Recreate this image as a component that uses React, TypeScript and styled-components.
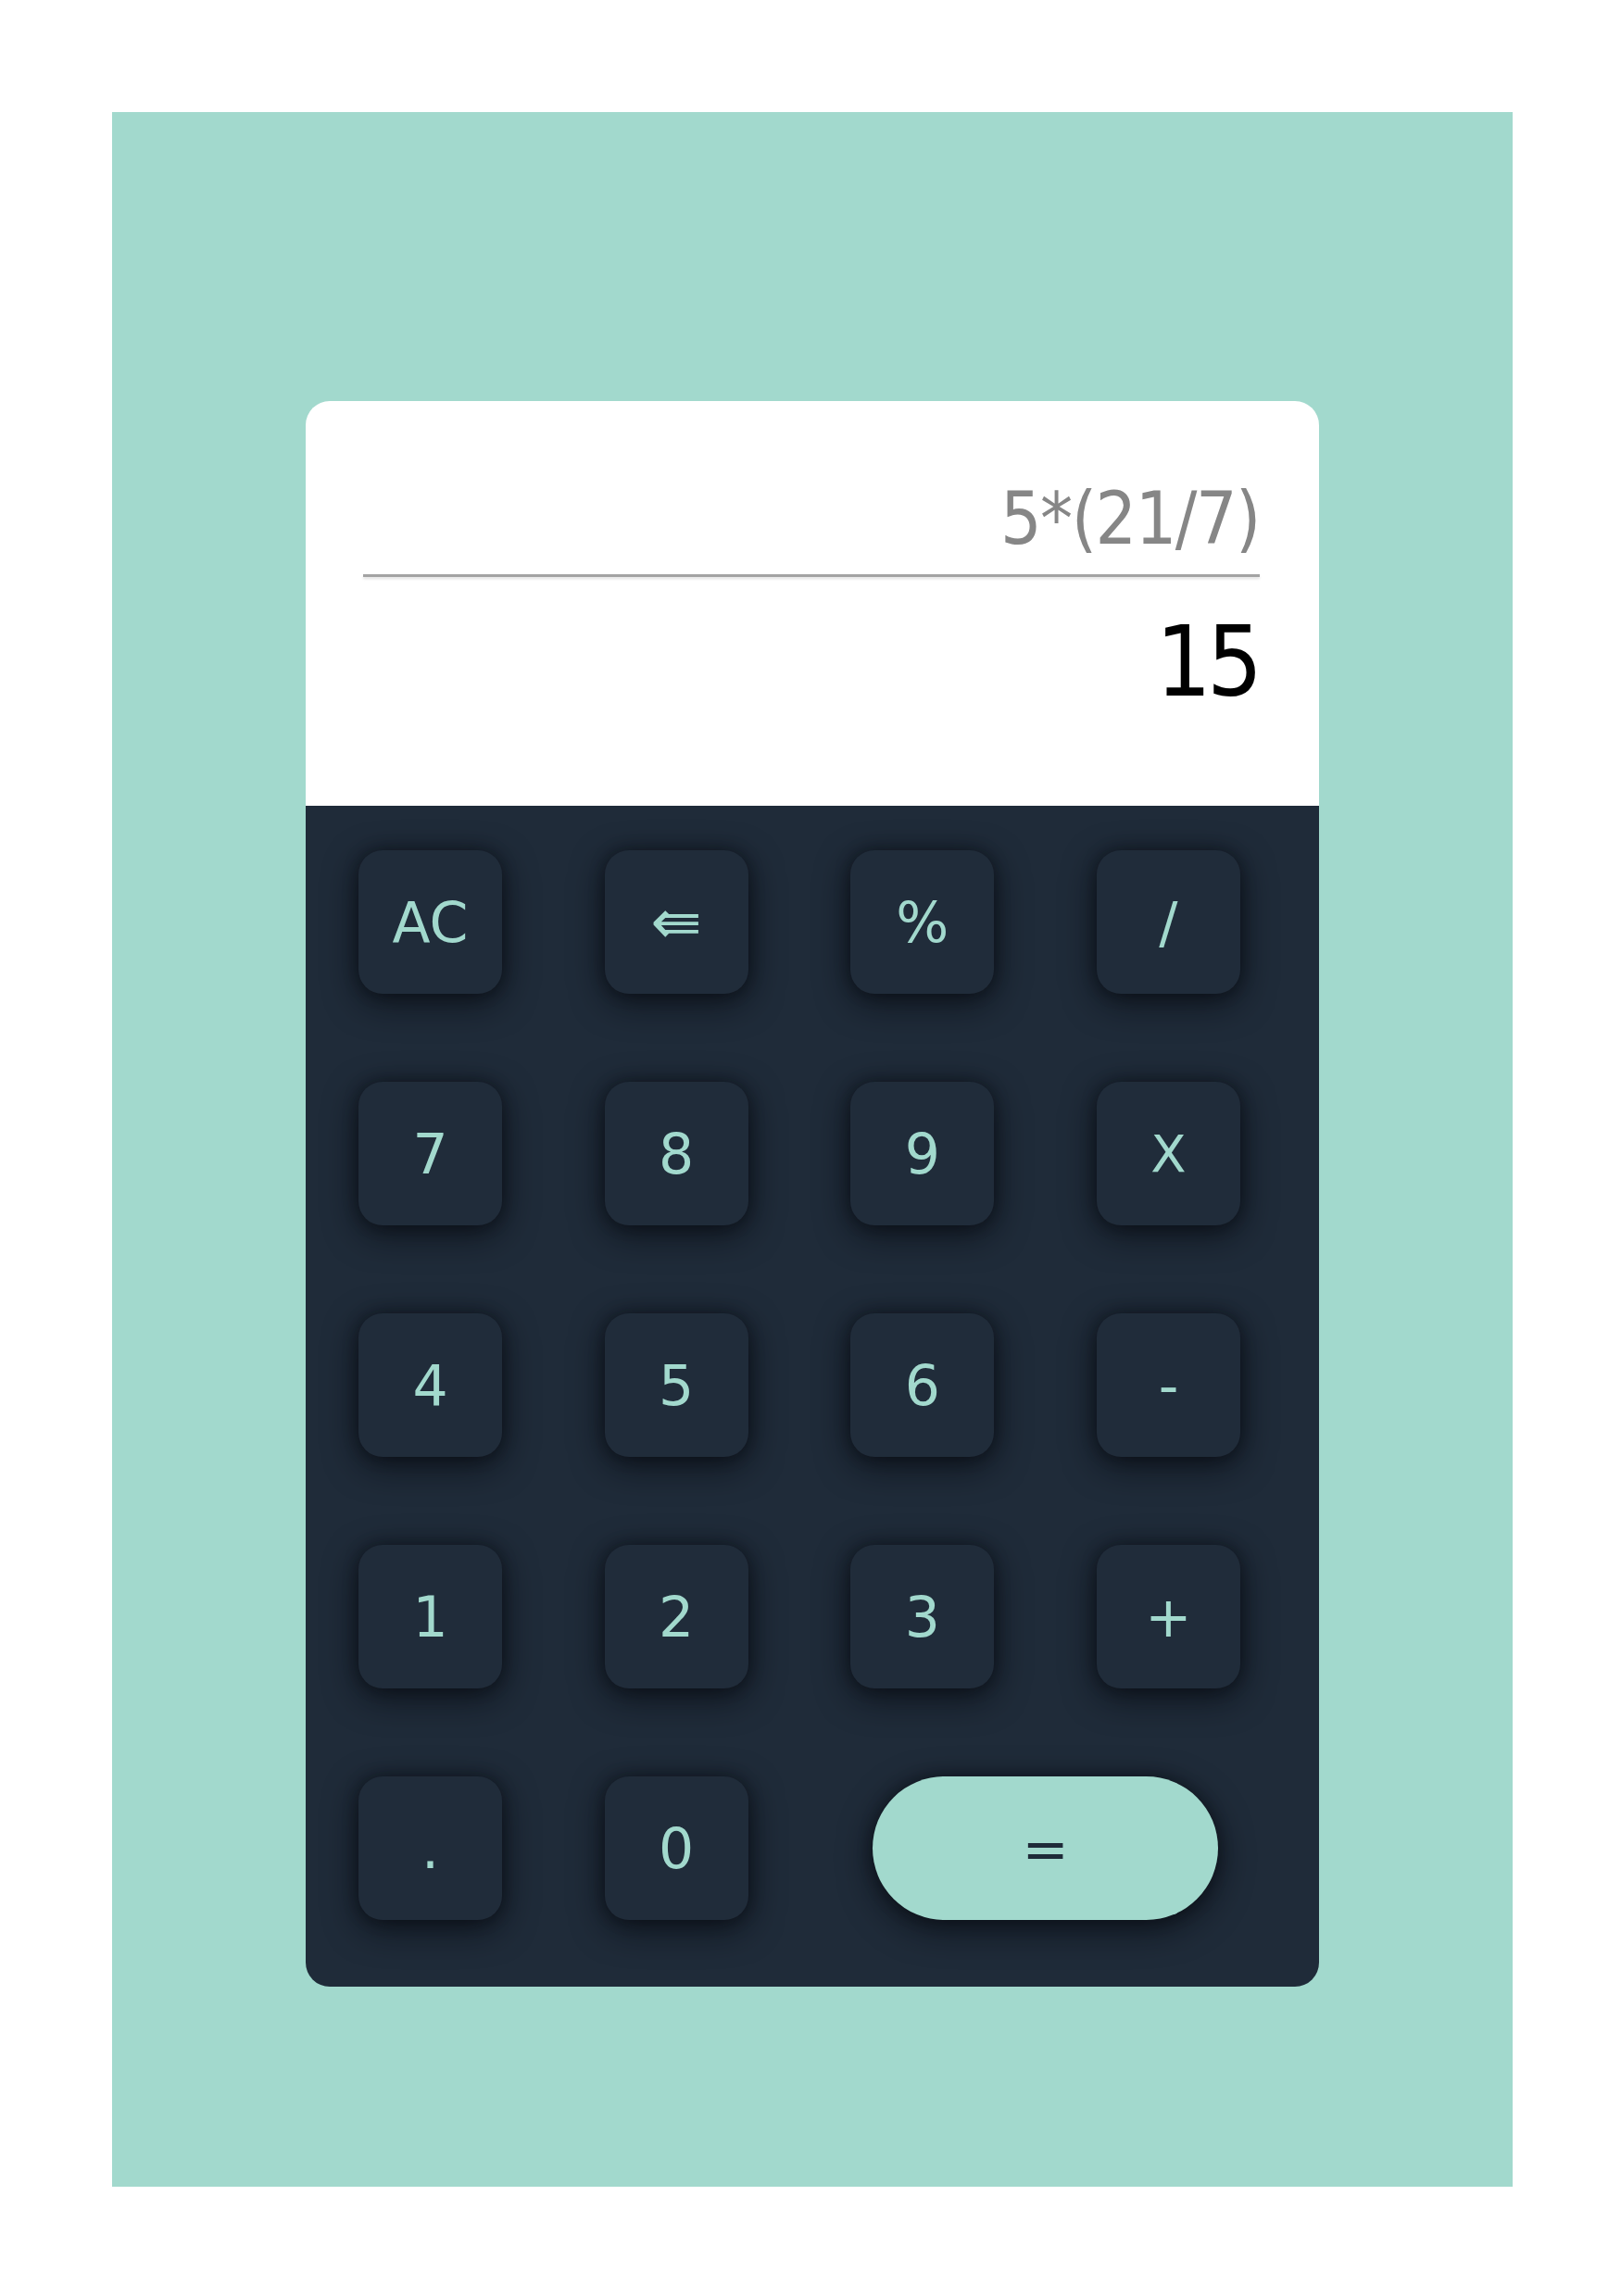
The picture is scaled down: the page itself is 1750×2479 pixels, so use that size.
import React from "react";
import styled, { createGlobalStyle } from "styled-components";

const GlobalStyle = createGlobalStyle`
  html, body {
    margin: 0;
    padding: 0;
    background: #ffffff;
  }
  body {
    font-family: "DejaVu Sans", "Noto Sans", sans-serif;
  }
`;

const Page = styled.div`
  width: 1750px;
  height: 2479px;
  box-sizing: border-box;
  padding: 121px 117px 118px 121px;
  background: #ffffff;
`;

const Poster = styled.div`
  width: 1512px;
  height: 2240px;
  box-sizing: border-box;
  background: #a2d9cd;
  padding: 312px 209px 216px 209px;
`;

const Calculator = styled.div`
  width: 1094px;
  border-radius: 26px;
  overflow: hidden;
  display: flex;
  flex-direction: column;
`;

const Display = styled.div`
  height: 437px;
  box-sizing: border-box;
  background: #ffffff;
  padding: 88px 64px 0 62px;
  display: flex;
  flex-direction: column;
  align-items: stretch;
  font-family: "DejaVu Sans Condensed", "DejaVu Sans", sans-serif;
  font-stretch: condensed;
`;

const Expression = styled.div`
  font-size: 78px;
  line-height: 78px;
  letter-spacing: -1.5px;
  color: #868686;
  text-align: right;
`;

const Divider = styled.div`
  margin-top: 21px;
  height: 3px;
  background: #a3a3a3;
  box-shadow: 0 2px 3px rgba(0, 0, 0, 0.12);
`;

const Result = styled.div`
  margin-top: 40px;
  font-size: 105px;
  line-height: 105px;
  letter-spacing: -5px;
  padding-right: 2px;
  color: #000000;
  text-align: right;
`;

const Keypad = styled.div`
  background: #1f2b39;
  padding: 48px 85px 72px 57px;
  display: grid;
  grid-template-columns: repeat(4, 155px);
  grid-auto-rows: 155px;
  column-gap: 110.67px;
  row-gap: 95px;
`;

const Key = styled.button<{ $wide?: boolean; $accent?: boolean; $size?: number }>`
  border: none;
  margin: 0;
  padding: 0;
  height: 155px;
  width: ${(p) => (p.$wide ? "373px" : "155px")};
  grid-column: ${(p) => (p.$wide ? "span 2" : "auto")};
  justify-self: center;
  border-radius: ${(p) => (p.$wide ? "78px" : "26px")};
  background: ${(p) => (p.$accent ? "#a2d9cd" : "#202c3a")};
  color: ${(p) => (p.$accent ? "#1f2b39" : "#a2d9cd")};
  box-shadow: 0 10px 36px rgba(6, 9, 14, 0.7), 0 0 16px rgba(6, 9, 14, 0.45);
  display: flex;
  align-items: center;
  justify-content: center;
  font-family: "DejaVu Sans", "Noto Sans", sans-serif;
  font-size: ${(p) => p.$size ?? 60}px;
  font-weight: 400;
  line-height: 1;
  cursor: pointer;
`;

type KeyDef = { label: string; wide?: boolean; accent?: boolean; size?: number };

const keys: KeyDef[] = [
  { label: "AC" },
  { label: "⇚", size: 66 },
  { label: "%" },
  { label: "/" },
  { label: "7" },
  { label: "8" },
  { label: "9" },
  { label: "X", size: 56 },
  { label: "4" },
  { label: "5" },
  { label: "6" },
  { label: "-" },
  { label: "1" },
  { label: "2" },
  { label: "3" },
  { label: "+" },
  { label: "." },
  { label: "0" },
  { label: "=", wide: true, accent: true },
];

export default function App() {
  return (
    <>
      <GlobalStyle />
      <Page>
        <Poster>
          <Calculator>
            <Display>
              <Expression>5*(21/7)</Expression>
              <Divider />
              <Result>15</Result>
            </Display>
            <Keypad>
              {keys.map((k) => (
                <Key key={k.label} $wide={k.wide} $accent={k.accent} $size={k.size}>
                  {k.label}
                </Key>
              ))}
            </Keypad>
          </Calculator>
        </Poster>
      </Page>
    </>
  );
}
